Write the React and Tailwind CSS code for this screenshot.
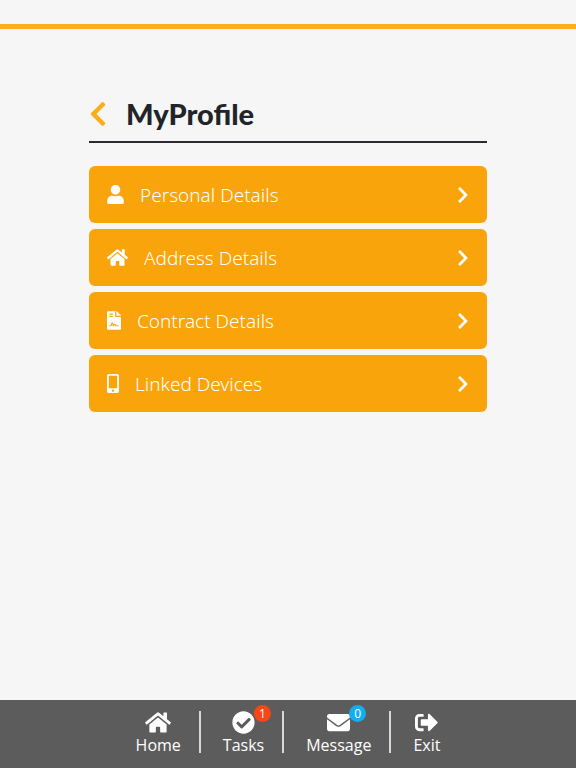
import React from 'react';
import {
  FaUser,
  FaHome,
  FaFileContract,
  FaMobileAlt,
  FaChevronLeft,
  FaChevronRight,
  FaCheckCircle,
  FaEnvelope,
  FaSignOutAlt,
} from 'react-icons/fa';

const menuItems = [
  { label: 'Personal Details', icon: FaUser, iconClass: 'w-[17px]' },
  { label: 'Address Details', icon: FaHome, iconClass: 'w-[21px]' },
  { label: 'Contract Details', icon: FaFileContract, iconClass: 'w-[14px]' },
  { label: 'Linked Devices', icon: FaMobileAlt, iconClass: 'w-[12px]' },
];

const navItems = [
  { label: 'Home', icon: FaHome, iconClass: 'w-[26px]' },
  { label: 'Tasks', icon: FaCheckCircle, iconClass: 'w-[23px]', count: 1, badgeClass: 'bg-[#fa4616]' },
  { label: 'Message', icon: FaEnvelope, iconClass: 'w-[23px]', count: 0, badgeClass: 'bg-[#12aeef]' },
  { label: 'Exit', icon: FaSignOutAlt, iconClass: 'w-[23px]' },
];

const MenuButton = ({ label, icon: Icon, iconClass }) => (
  <button
    type="button"
    className="flex h-[57px] w-full items-center rounded-md bg-[#f9a40a] pl-[18px] pr-[15px] text-white"
  >
    {/* Icons keep their own width, so the label starts right after each one */}
    <Icon className={`h-[19px] shrink-0 ${iconClass}`} />
    <span className="ml-4 font-['Noto_Sans','Open_Sans',sans-serif] text-[19px] font-light leading-6">{label}</span>
    <FaChevronRight className="ml-auto size-[18px] shrink-0" />
  </button>
);

const NavItem = ({ label, icon: Icon, iconClass, count, badgeClass }) => (
  <li className="border-r-2 border-[#d8d8d8] pl-[22px] pr-[18px] first:pl-0 last:border-r-0 last:pr-0">
    <a href="#" className="flex h-[42px] flex-col items-center text-white">
      <span className="relative">
        <Icon className={`h-[23px] ${iconClass}`} />
        {count !== undefined && (
          <span
            className={`absolute -top-1.5 left-full -ml-px flex size-[17px] items-center justify-center rounded-full text-xs leading-none ${badgeClass}`}
          >
            {count}
          </span>
        )}
      </span>
      <span className="text-base leading-[22px]">{label}</span>
    </a>
  </li>
);

const App = () => {
  return (
    <div className="flex min-h-screen flex-col bg-[#f6f6f6] font-['Open_Sans',sans-serif]">
      <header className="border-b-[5px] border-[#fbad1a] pt-6" />

      <main className="flex-1 px-[89px] pt-[69px]">
        <div className="flex items-center border-b-2 border-[#2a2a30] pb-[11px]">
          <button type="button" aria-label="Back" className="text-[#fbad1a]">
            <FaChevronLeft className="h-[28px] w-[18px]" />
          </button>
          <h1 className="ml-[19px] font-['Lato',sans-serif] text-[29px] font-black leading-8 text-[#212529]">
            MyProfile
          </h1>
        </div>

        <div className="mt-[23px] flex flex-col gap-1.5">
          {menuItems.map((item) => (
            <MenuButton key={item.label} {...item} />
          ))}
        </div>
      </main>

      <footer className="bg-[#5c5c5c] pb-[15px] pt-[11px]">
        <nav>
          <ul className="flex justify-center">
            {navItems.map((item) => (
              <NavItem key={item.label} {...item} />
            ))}
          </ul>
        </nav>
      </footer>
    </div>
  );
};

export default App;
